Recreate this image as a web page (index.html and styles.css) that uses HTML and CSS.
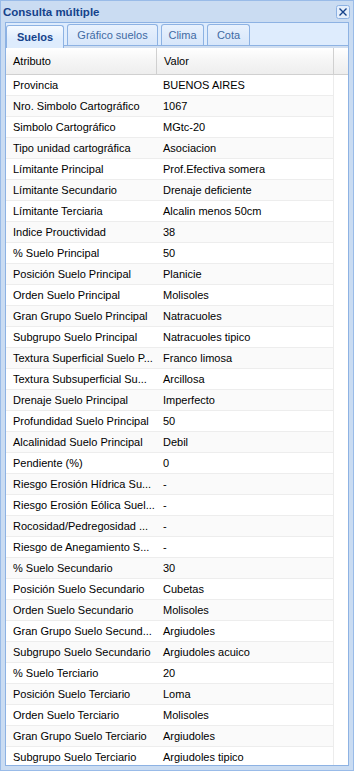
FILE: index.html
```html
<!DOCTYPE html>
<html lang="es">
<head>
  <meta charset="UTF-8">
  <title>Consulta múltiple</title>
  <link rel="stylesheet" href="styles.css">
</head>
<body>
  <div class="window">
    <div class="win-header">
      <span class="win-title">Consulta múltiple</span>
      <span class="win-close">
        <svg width="14" height="14" viewBox="0 0 14 14">
          <rect x="0.5" y="0.5" width="13" height="13" rx="2" fill="#e4eefb" stroke="#8db2e3"/>
          <path d="M3.5 3.5 L10.5 10.5 M10.5 3.5 L3.5 10.5" stroke="#15428b" stroke-width="1.4"/>
        </svg>
      </span>
    </div>

    <div class="tabstrip">
      <div class="tab active t-suelos">Suelos</div>
      <div class="tab t-grafico">Gráfico suelos</div>
      <div class="tab t-clima">Clima</div>
      <div class="tab t-cota">Cota</div>
    </div>

    <div class="grid">
      <div class="grid-head">
        <div class="cell c1">Atributo</div>
        <div class="cell c2">Valor</div>
        <div class="cell c3"></div>
      </div>
      <div class="grid-body">
        <div class="rows" id="rows"></div>
        <div class="scroll-space"></div>
      </div>
    </div>
  </div>

  <script>
    const data = [
      ["Provincia", "BUENOS AIRES"],
      ["Nro. Simbolo Cartográfico", "1067"],
      ["Simbolo Cartográfico", "MGtc-20"],
      ["Tipo unidad cartográfica", "Asociacion"],
      ["Límitante Principal", "Prof.Efectiva somera"],
      ["Límitante Secundario", "Drenaje deficiente"],
      ["Límitante Terciaria", "Alcalin menos 50cm"],
      ["Indice Prouctividad", "38"],
      ["% Suelo Principal", "50"],
      ["Posición Suelo Principal", "Planicie"],
      ["Orden Suelo Principal", "Molisoles"],
      ["Gran Grupo Suelo Principal", "Natracuoles"],
      ["Subgrupo Suelo Principal", "Natracuoles tipico"],
      ["Textura Superficial Suelo P...", "Franco limosa"],
      ["Textura Subsuperficial Su...", "Arcillosa"],
      ["Drenaje Suelo Principal", "Imperfecto"],
      ["Profundidad Suelo Principal", "50"],
      ["Alcalinidad Suelo Principal", "Debil"],
      ["Pendiente (%)", "0"],
      ["Riesgo Erosión Hídrica Su...", "-"],
      ["Riesgo Erosión Eólica Suel...", "-"],
      ["Rocosidad/Pedregosidad ...", "-"],
      ["Riesgo de Anegamiento S...", "-"],
      ["% Suelo Secundario", "30"],
      ["Posición Suelo Secundario", "Cubetas"],
      ["Orden Suelo Secundario", "Molisoles"],
      ["Gran Grupo Suelo Secund...", "Argiudoles"],
      ["Subgrupo Suelo Secundario", "Argiudoles acuico"],
      ["% Suelo Terciario", "20"],
      ["Posición Suelo Terciario", "Loma"],
      ["Orden Suelo Terciario", "Molisoles"],
      ["Gran Grupo Suelo Terciario", "Argiudoles"],
      ["Subgrupo Suelo Terciario", "Argiudoles tipico"]
    ];

    const rows = document.getElementById('rows');
    data.forEach((d, i) => {
      const row = document.createElement('div');
      row.className = 'row' + (i % 2 ? ' alt' : '');
      row.innerHTML = `<div class="cell c1">${d[0]}</div><div class="cell c2">${d[1]}</div>`;
      rows.appendChild(row);
    });
  </script>
</body>
</html>
```

FILE: styles.css
```css
/* Base */
* { box-sizing: border-box; margin: 0; padding: 0; }
html, body { height: 100%; }
body {
  font-family: Tahoma, "Liberation Sans", Arial, sans-serif;
  font-size: 11px;
  color: #000;
  background: #fff;
  overflow: hidden;
}

/* Window */
.window {
  width: 354px;
  height: 771px;
  background: #cadcf2;
  border: 1px solid #99bbe8;
  padding: 0 4px 4px 4px;
  display: flex;
  flex-direction: column;
}
.win-header {
  height: 21px;
  display: flex;
  align-items: center;
  justify-content: space-between;
  padding: 0;
}
.win-title {
  font-weight: bold;
  color: #15428b;
  font-size: 11.5px;
  margin-left: -2px;
}
.win-close {
  display: flex;
  margin-right: -1px;
  margin-top: 1px;
}

/* Tabs */
.tabstrip {
  height: 26px;
  background: #deecfd;
  border: 1px solid #8db2e3;
  border-bottom: none;
  display: flex;
  align-items: flex-end;
  gap: 3px;
  padding-left: 0;
  position: relative;
}
.tabstrip::after {
  content: "";
  position: absolute;
  left: 0; right: 0; bottom: 0;
  height: 2px;
  background: #d0def0;
  border-top: 1px solid #8db2e3;
}
.tab {
  height: 21px;
  padding-top: 4px;
  text-align: center;
  border: 1px solid #8db2e3;
  border-bottom: none;
  border-radius: 3px 3px 0 0;
  background: linear-gradient(#e8f1fd, #d7e6fa);
  color: #416aa3;
  position: relative;
  z-index: 1;
  margin-bottom: 3px;
  white-space: nowrap;
}
.tab.active {
  height: 23px;
  margin-bottom: 0;
  background: linear-gradient(#f6faff, #deecfd 60%, #deecfd);
  color: #15428b;
  font-weight: bold;
  padding-top: 5px;
  z-index: 2;
}
.t-suelos { width: 58px; }
.t-grafico { width: 91px; }
.t-clima { width: 43px; }
.t-cota { width: 43px; }

/* Grid */
.grid {
  flex: 1;
  background: #fff;
  border: 1px solid #8db2e3;
  border-top: none;
  display: flex;
  flex-direction: column;
  overflow: hidden;
}
.grid-head {
  height: 27px;
  display: flex;
  background: linear-gradient(#ffffff, #f5f5f5 50%, #eeeeee);
  border-bottom: 1px solid #d0d0d0;
}
.grid-head .cell {
  border-right: 1px solid #d0d0d0;
  line-height: 26px;
}
.grid-head .c3 {
  flex: 1;
  border-right: none;
}
.cell {
  padding-left: 7px;
  white-space: nowrap;
  overflow: hidden;
}
.c1 { width: 151px; }
.c2 { width: 177px; }

.grid-body {
  flex: 1;
  display: flex;
  overflow: hidden;
}
.rows {
  width: 328px;
  border-right: 1px solid #ececec;
}
.row {
  height: 21px;
  display: flex;
  border-bottom: 1px solid #ededed;
  line-height: 20px;
}
.row .c1 { width: 150px; padding-left: 7px; }
.row .c2 { padding-left: 7px; }
.row.alt { background: #fafafa; }
.scroll-space {
  flex: 1;
  background: #fff;
}
```
